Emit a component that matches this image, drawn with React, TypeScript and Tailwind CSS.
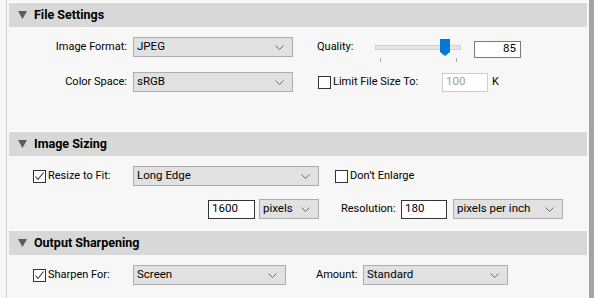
import React from 'react';

const font = { fontFamily: 'Roboto, "Noto Sans", sans-serif' };

function Chevron() {
  return (
    <svg width="9" height="5" viewBox="0 0 9 5" className="shrink-0">
      <path d="M0.5 0.5 L4.5 4.5 L8.5 0.5" fill="none" stroke="#6b6b6b" strokeWidth="1" />
    </svg>
  );
}

function Select({ value, width }: { value: string; width: string }) {
  return (
    <div className={`flex h-[20px] ${width} shrink-0 items-center justify-between border border-[#adadad] bg-[#e1e1e1] pl-[3px] pr-[8px] text-[11.5px] text-black`}>
      <span>{value}</span>
      <Chevron />
    </div>
  );
}

function Checkbox({ checked }: { checked?: boolean }) {
  return (
    <div className="flex h-[13px] w-[13px] shrink-0 items-center justify-center border border-[#333] bg-white">
      {checked && (
        <svg width="11" height="11" viewBox="0 0 11 11">
          <path d="M1.5 5.5 L4 8.5 L9.5 1.5" fill="none" stroke="#333" strokeWidth="1.1" />
        </svg>
      )}
    </div>
  );
}

function SectionHeader({ title }: { title: string }) {
  return (
    <div className="flex h-[25px] items-center border-t border-white bg-[#d8d8d8] pl-[9px]">
      <svg width="9" height="8" viewBox="0 0 9 8">
        <path d="M0 0 H9 L4.5 8 Z" fill="#5c5c5c" />
      </svg>
      <span className="ml-[7px] text-[12.5px] font-bold text-black">{title}</span>
    </div>
  );
}

function QualitySlider() {
  return (
    <svg width="86" height="26" viewBox="0 0 86 26" className="shrink-0 self-start overflow-visible">
      <rect x="0.5" y="8.5" width="85" height="4" fill="#e6e6e6" stroke="#d2d2d2" />
      <path d="M65 2 H75 V15 L70 19 L65 15 Z" fill="#0078d7" />
      <rect x="5" y="21" width="1" height="4" fill="#b0b0b0" />
      <rect x="81" y="21" width="1" height="4" fill="#b0b0b0" />
    </svg>
  );
}

export default function App() {
  return (
    <div className="flex h-[298px] w-[594px] overflow-hidden bg-[#f7f7f7] text-[11px] text-black" style={font}>
      <div className="w-[6px] shrink-0" />
      <div className="w-px shrink-0 bg-[#cfcfcf]" />
      <div className="w-[2px] shrink-0" />

      <div className="flex w-[578px] shrink-0 flex-col pt-[2px]">
        <SectionHeader title="File Settings" />
        <div className="flex h-[104px] flex-col gap-[15px] pt-[10px]">
          <div className="flex h-[20px] items-center">
            <div className="w-[118px] text-right">Image Format:</div>
            <div className="ml-[6px]">
              <Select value="JPEG" width="w-[160px]" />
            </div>
            <div className="ml-[24px] w-[58px]">Quality:</div>
            <QualitySlider />
            <div className="ml-[13px] mt-[4px] flex h-[17px] w-[47px] items-center justify-end border border-[#7a7a7a] bg-white pr-[4px] text-[11.5px]">
              85
            </div>
          </div>
          <div className="flex h-[20px] items-center">
            <div className="w-[118px] text-right">Color Space:</div>
            <div className="ml-[6px]">
              <Select value="sRGB" width="w-[160px]" />
            </div>
            <div className="ml-[25px]">
              <Checkbox />
            </div>
            <div className="ml-[2px] w-[109px]">Limit File Size To:</div>
            <div className="flex h-[19px] w-[46px] items-center border border-[#cdcdcd] bg-white pl-[3px] text-[11.5px] text-[#a0a0a0]">
              100
            </div>
            <div className="ml-[4px]">K</div>
          </div>
        </div>

        <SectionHeader title="Image Sizing" />
        <div className="flex h-[74px] flex-col gap-[13px] pt-[10px]">
          <div className="flex h-[20px] items-center">
            <div className="ml-[24px]">
              <Checkbox checked />
            </div>
            <div className="ml-[2px] w-[85px]">Resize to Fit:</div>
            <Select value="Long Edge" width="w-[186px]" />
            <div className="ml-[16px]">
              <Checkbox />
            </div>
            <div className="ml-[2px]">Don’t Enlarge</div>
          </div>
          <div className="flex h-[20px] items-center">
            <div className="ml-[199px] flex h-[19px] w-[47px] items-center border border-[#333] bg-white pl-[3px] text-[11.5px]">
              1600
            </div>
            <div className="ml-[4px]">
              <Select value="pixels" width="w-[60px]" />
            </div>
            <div className="ml-[22px] w-[60px]">Resolution:</div>
            <div className="flex h-[19px] w-[46px] items-center border border-[#333] bg-white pl-[3px] text-[11.5px]">
              180
            </div>
            <div className="ml-[6px]">
              <Select value="pixels per inch" width="w-[110px]" />
            </div>
          </div>
        </div>

        <SectionHeader title="Output Sharpening" />
        <div className="flex flex-col pt-[10px]">
          <div className="flex h-[20px] items-center">
            <div className="ml-[24px]">
              <Checkbox checked />
            </div>
            <div className="ml-[2px] w-[85px]">Sharpen For:</div>
            <Select value="Screen" width="w-[153px]" />
            <div className="ml-[30px] w-[47px]">Amount:</div>
            <Select value="Standard" width="w-[145px]" />
          </div>
        </div>
      </div>

      <div className="w-[2px] shrink-0" />
      <div className="w-[5px] shrink-0 bg-[#a3a3a3]" />
    </div>
  );
}
